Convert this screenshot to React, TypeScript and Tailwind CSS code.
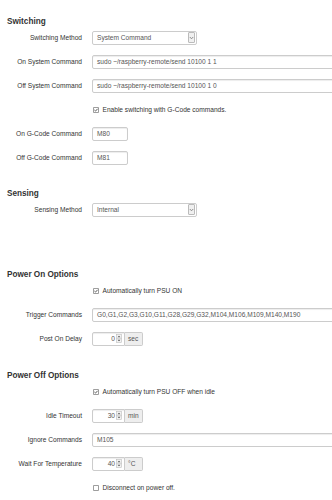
import React from 'react'

const font = { fontFamily: '"Liberation Sans", Arial, sans-serif' }

function Heading({ children, className = '' }: { children: React.ReactNode; className?: string }) {
  return (
    <div className={`text-[8.2px] font-bold leading-[10px] text-[#333] mb-[4px] ${className}`}>{children}</div>
  )
}

function Row({ label, children }: { label: string; children: React.ReactNode }) {
  return (
    <div className="flex items-center h-[14px] mb-[10px] gap-[10px]">
      <div className="w-[75px] shrink-0 text-right text-[6.6px] leading-[14px] text-[#333] whitespace-nowrap">{label}</div>
      {children}
    </div>
  )
}

function TextInput({ value, width }: { value: string; width: string }) {
  return (
    <div
      className={`${width} h-[14px] shrink-0 border border-[#ccc] rounded-[2px] bg-white shadow-[inset_0_1px_1px_rgba(0,0,0,0.075)] pl-[4px] text-[6.6px] leading-[12px] text-[#555] whitespace-nowrap overflow-hidden`}
    >
      {value}
    </div>
  )
}

function Select({ value }: { value: string }) {
  return (
    <div className="w-[105px] h-[14px] shrink-0 flex items-center justify-between border border-[#ccc] rounded-[2px] bg-white pl-[4px] pr-[1px]">
      <span className="text-[6.6px] leading-[12px] text-[#555]">{value}</span>
      <div className="w-[7px] h-[11px] border border-[#bbb] bg-[#f0f0f0] rounded-[1px] flex items-center justify-center">
        <svg width="5" height="4" viewBox="0 0 5 4">
          <path d="M0.8 1 L2.5 2.8 L4.2 1" fill="none" stroke="#777" strokeWidth="0.8" />
        </svg>
      </div>
    </div>
  )
}

function NumberInput({ value, unit }: { value: string; unit: string }) {
  return (
    <div className="flex h-[14px] shrink-0">
      <div className="w-[33px] h-[14px] flex items-center justify-end border border-[#ccc] rounded-l-[2px] bg-white shadow-[inset_0_1px_1px_rgba(0,0,0,0.075)] pr-[2px] gap-[1px]">
        <span className="text-[6.6px] leading-[12px] text-[#555]">{value}</span>
        <svg width="6" height="9" viewBox="0 0 6 9">
          <rect x="0.5" y="0.5" width="5" height="8" fill="#f3f3f3" stroke="#bbb" strokeWidth="0.6" />
          <line x1="0.5" y1="4.5" x2="5.5" y2="4.5" stroke="#bbb" strokeWidth="0.5" />
          <path d="M1.5 3.3 L3 1.7 L4.5 3.3 Z" fill="#555" />
          <path d="M1.5 5.7 L3 7.3 L4.5 5.7 Z" fill="#555" />
        </svg>
      </div>
      <div className="w-[18px] h-[14px] border border-l-0 border-[#ccc] rounded-r-[2px] bg-[#eee] pl-[3px] text-[6.6px] leading-[12px] text-[#555]">
        {unit}
      </div>
    </div>
  )
}

function Check({ label, checked }: { label: string; checked: boolean }) {
  return (
    <div className="flex items-center h-[14px] mb-[10px] pl-[86px] gap-[3.5px]">
      <svg width="6" height="6" viewBox="0 0 6 6" className="shrink-0">
        <rect x="0.4" y="0.4" width="5.2" height="5.2" rx="0.6" fill="white" stroke="#666" strokeWidth="0.7" />
        {checked && <path d="M1.4 3 L2.5 4.1 L4.6 1.8" fill="none" stroke="#333" strokeWidth="0.8" />}
      </svg>
      <span className="text-[6.6px] leading-[14px] text-[#333] whitespace-nowrap">{label}</span>
    </div>
  )
}

export default function App() {
  return (
    <div className="w-[332px] h-[500px] overflow-hidden bg-white pl-[7px] pt-[16.7px] flex flex-col" style={font}>
      {/* Switching */}
      <Heading>Switching</Heading>
      <Row label="Switching Method">
        <Select value="System Command" />
      </Row>
      <Row label="On System Command">
        <TextInput width="w-[260px]" value="sudo ~/raspberry-remote/send 10100 1 1" />
      </Row>
      <Row label="Off System Command">
        <TextInput width="w-[260px]" value="sudo ~/raspberry-remote/send 10100 1 0" />
      </Row>
      <Check checked label="Enable switching with G-Code commands." />
      <Row label="On G-Code Command">
        <TextInput width="w-[36px]" value="M80" />
      </Row>
      <Row label="Off G-Code Command">
        <TextInput width="w-[36px]" value="M81" />
      </Row>

      {/* Sensing */}
      <Heading className="mt-[14px]">Sensing</Heading>
      <Row label="Sensing Method">
        <Select value="Internal" />
      </Row>

      {/* Power On */}
      <Heading className="mt-[43px]">Power On Options</Heading>
      <Check checked label="Automatically turn PSU ON" />
      <Row label="Trigger Commands">
        <TextInput width="w-[260px]" value="G0,G1,G2,G3,G10,G11,G28,G29,G32,M104,M106,M109,M140,M190" />
      </Row>
      <Row label="Post On Delay">
        <NumberInput value="0" unit="sec" />
      </Row>

      {/* Power Off */}
      <Heading className="mt-[15px]">Power Off Options</Heading>
      <Check checked label="Automatically turn PSU OFF when idle" />
      <Row label="Idle Timeout">
        <NumberInput value="30" unit="min" />
      </Row>
      <Row label="Ignore Commands">
        <TextInput width="w-[260px]" value="M105" />
      </Row>
      <Row label="Wait For Temperature">
        <NumberInput value="40" unit="°C" />
      </Row>
      <Check checked={false} label="Disconnect on power off." />
    </div>
  )
}
